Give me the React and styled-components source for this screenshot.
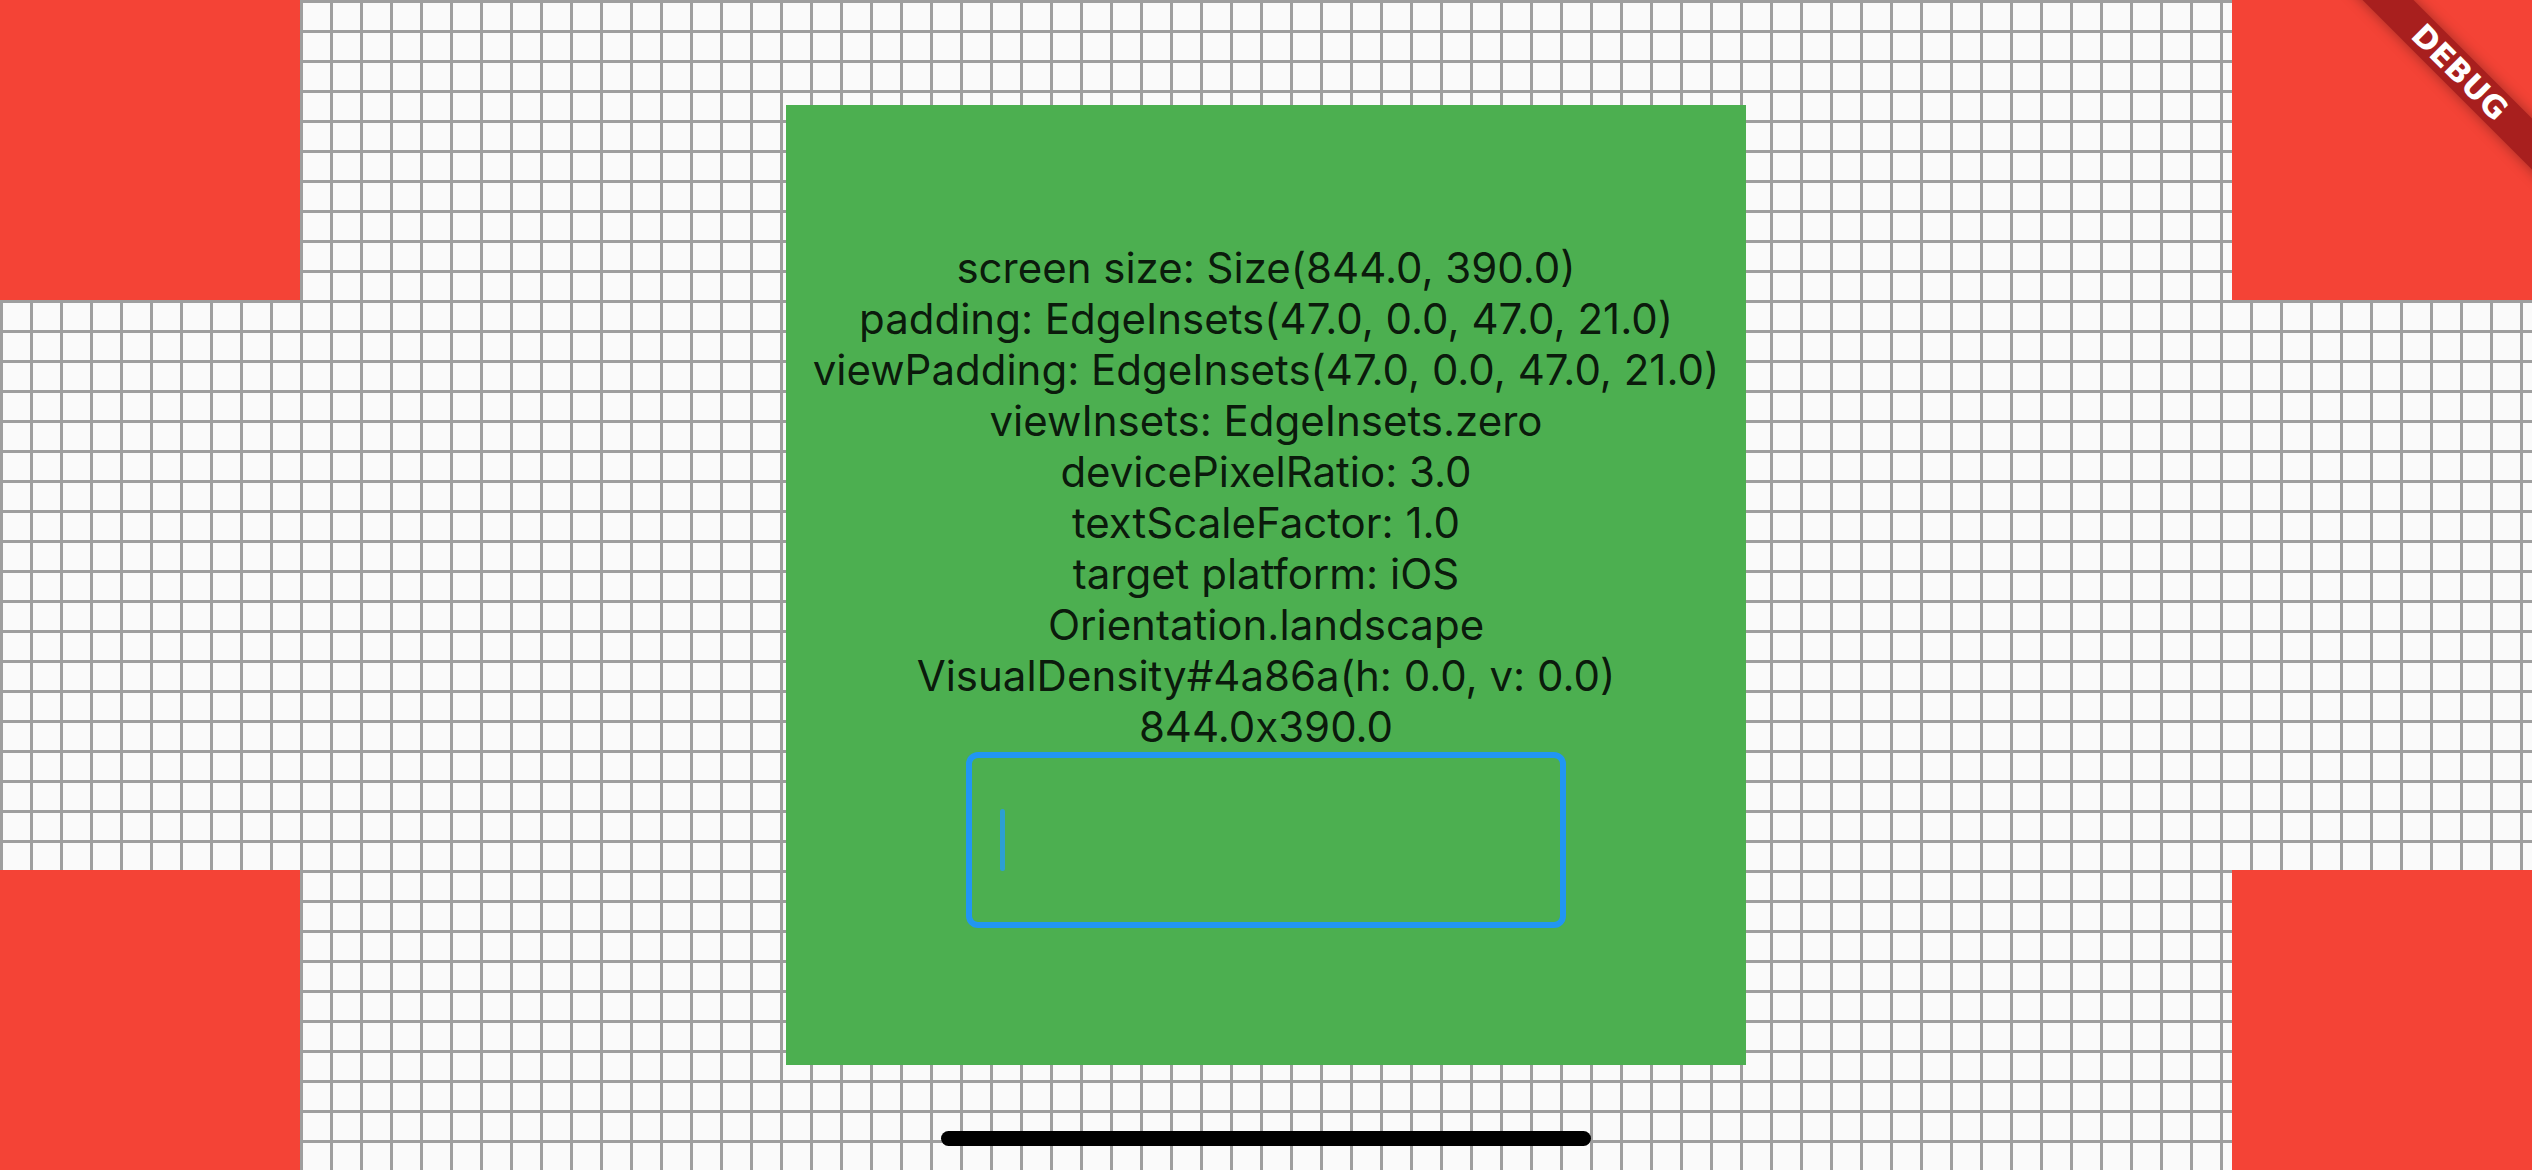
import styled, { createGlobalStyle } from "styled-components";

const lines = [
  "screen size: Size(844.0, 390.0)",
  "padding: EdgeInsets(47.0, 0.0, 47.0, 21.0)",
  "viewPadding: EdgeInsets(47.0, 0.0, 47.0, 21.0)",
  "viewInsets: EdgeInsets.zero",
  "devicePixelRatio: 3.0",
  "textScaleFactor: 1.0",
  "target platform: iOS",
  "Orientation.landscape",
  "VisualDensity#4a86a(h: 0.0, v: 0.0)",
  "844.0x390.0",
];

const Global = createGlobalStyle`
  html, body {
    margin: 0;
    padding: 0;
    overflow: hidden;
  }
  body {
    font-family: Inter, "Noto Sans", sans-serif;
  }
`;

export default function App() {
  return (
    <>
      <Global />
      <Screen>
        <Side>
          <Corner />
          <Corner />
        </Side>
        <Middle>
          <Panel>
            <Info>
              {lines.map((l) => (
                <Line key={l}>{l}</Line>
              ))}
            </Info>
            <Field>
              <Caret />
            </Field>
          </Panel>
        </Middle>
        <Side>
          <Corner />
          <Corner />
        </Side>
        <HomeBar />
        <BannerClip>
          <Banner>DEBUG</Banner>
        </BannerClip>
      </Screen>
    </>
  );
}

const Screen = styled.div`
  position: relative;
  width: 2532px;
  height: 1170px;
  display: flex;
  background-color: #fafafa;
  background-image: linear-gradient(to right, #9e9e9e 3px, transparent 3px),
    linear-gradient(to bottom, #9e9e9e 3px, transparent 3px);
  background-size: 30px 30px;
  overflow: hidden;
`;

const Side = styled.div`
  width: 300px;
  display: flex;
  flex-direction: column;
  justify-content: space-between;
`;

const Corner = styled.div`
  width: 300px;
  height: 300px;
  background: #f44336;
`;

const Middle = styled.div`
  flex: 1;
  display: flex;
  align-items: center;
  justify-content: center;
`;

const Panel = styled.div`
  width: 960px;
  height: 960px;
  background: #4caf50;
  display: flex;
  flex-direction: column;
  align-items: center;
  justify-content: center;
`;

const Info = styled.div`
  display: flex;
  flex-direction: column;
  align-items: center;
`;

const Line = styled.div`
  font-size: 42px;
  line-height: 51.1px;
  color: rgba(0, 0, 0, 0.87);
  white-space: nowrap;
`;

const Field = styled.div`
  box-sizing: border-box;
  width: 600px;
  height: 176px;
  border: 6px solid #2196f3;
  border-radius: 12px;
  display: flex;
  align-items: center;
  padding-left: 28px;
`;

const Caret = styled.div`
  width: 5px;
  height: 62px;
  border-radius: 3px;
  background: #2d9fd4;
`;

const HomeBar = styled.div`
  position: absolute;
  left: 941px;
  bottom: 24px;
  width: 650px;
  height: 15px;
  border-radius: 8px;
  background: #000;
`;

const BannerClip = styled.div`
  position: absolute;
  top: 0;
  right: 0;
  width: 200px;
  height: 200px;
  overflow: hidden;
  pointer-events: none;
`;

const Banner = styled.div`
  position: absolute;
  left: 127.9px;
  top: 72.1px;
  width: 400px;
  height: 36px;
  margin-left: -200px;
  margin-top: -18px;
  transform: rotate(45deg);
  background: #a81f1e;
  box-shadow: 0 0 14px rgba(0, 0, 0, 0.35);
  color: #fff;
  font-family: "DejaVu Sans", sans-serif;
  font-weight: 900;
  font-size: 31px;
  line-height: 36px;
  text-align: center;
`;
